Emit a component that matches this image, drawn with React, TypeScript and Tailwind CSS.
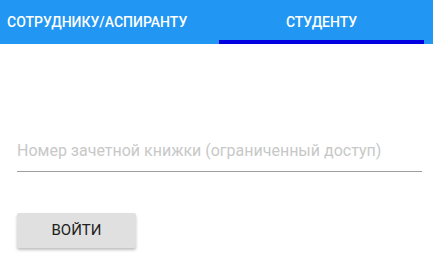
import { useState } from "react";

export default function App() {
  const [tab, setTab] = useState(1);
  const [value, setValue] = useState("");

  return (
    <div className="w-[433px] h-[269px] bg-white font-['Roboto',sans-serif]">
      <div className="flex h-[44px] bg-[#2196f3] text-white">
        <button
          onClick={() => setTab(0)}
          className="relative w-[219px] pl-[7px] text-left text-[14px] font-medium uppercase"
        >
          Сотруднику/аспиранту
          {tab === 0 && <span className="absolute left-0 right-0 bottom-0 h-[4px] bg-[#0000e0]" />}
        </button>
        <button
          onClick={() => setTab(1)}
          className="relative w-[205px] text-center text-[14px] font-medium uppercase"
        >
          Студенту
          {tab === 1 && <span className="absolute left-0 right-0 bottom-0 h-[4px] bg-[#0000e0]" />}
        </button>
      </div>

      <div className="px-[17px] pt-[92px]">
        <input
          type="text"
          value={value}
          onChange={(e) => setValue(e.target.value)}
          placeholder="Номер зачетной книжки (ограниченный доступ)"
          className="block w-[405px] h-[36px] border-b border-[#9e9e9e] pb-[6px] text-[16px] text-[#212121] placeholder-[#c8c8c8] outline-none"
        />
        <button className="mt-[41px] w-[119px] h-[35px] rounded-[2px] bg-[#e0e0e0] text-[15px] text-[#212121] uppercase shadow-[0_2px_3px_rgba(0,0,0,0.25)]">
          Войти
        </button>
      </div>
    </div>
  );
}
